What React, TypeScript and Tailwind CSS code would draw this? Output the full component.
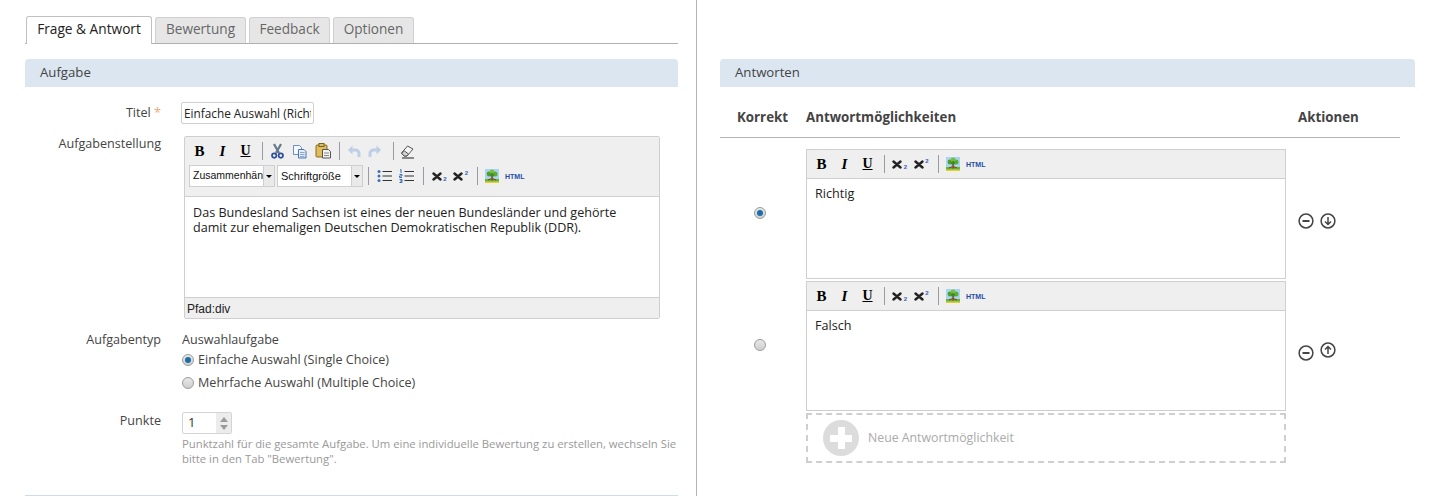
import type { ReactNode } from "react";

function Sep() {
  return <span className="mx-[5px] h-[18px] w-px bg-[#9a9aa0]" />;
}

function Btn({ children, w = "w-[23px]" }: { children: ReactNode; w?: string }) {
  return <span className={`flex h-5 shrink-0 items-center justify-center ${w}`}>{children}</span>;
}

function Bold() {
  return <span className="font-['Liberation_Serif',serif] text-[15px] font-bold leading-none text-black">B</span>;
}
function Italic() {
  return <span className="font-['Liberation_Serif',serif] text-[15px] font-bold italic leading-none text-black">I</span>;
}
function Under() {
  return <span className="font-['Liberation_Serif',serif] text-[14px] font-bold leading-none text-black underline">U</span>;
}

function Sub({ sup }: { sup?: boolean }) {
  return (
    <span className="relative flex h-4 w-[15px] items-center">
      <svg width="10" height="9" viewBox="0 0 10 9">
        <path d="M1.5 1.5 L8.5 7.5 M8.5 1.5 L1.5 7.5" stroke="#222" strokeWidth="2.4" strokeLinecap="round" />
      </svg>
      <span
        className={`absolute right-0 font-['Liberation_Sans',sans-serif] text-[6px] font-bold leading-none text-[#3560b8] ${
          sup ? "top-[2px]" : "bottom-[2px]"
        }`}
      >
        2
      </span>
    </span>
  );
}

function TreeIcon() {
  return (
    <svg width="14" height="14" viewBox="0 0 14 14">
      <rect width="14" height="14" fill="#a8d4f2" />
      <rect y="10" width="14" height="4" fill="#62b832" />
      <rect y="12.5" width="14" height="1.5" fill="#e8cc3a" />
      <path d="M6.4 6h1.4v5.5H6.4z" fill="#8a3524" />
      <path d="M3 11l3.5-1.5M11 11l-3.5-1.5" stroke="#8a3524" />
      <circle cx="4" cy="5" r="2.4" fill="#4f9e2a" />
      <circle cx="10" cy="5" r="2.5" fill="#5bab30" />
      <circle cx="7" cy="3" r="2.4" fill="#74bf3f" />
      <circle cx="7" cy="6" r="2" fill="#3f8a24" />
    </svg>
  );
}

function Html() {
  return (
    <span className="font-['Liberation_Sans',sans-serif] text-[7px] font-bold leading-none text-[#1f4da8]">
      HTML
    </span>
  );
}

function Scissors() {
  return (
    <svg width="13" height="16" viewBox="0 0 13 16" fill="none">
      <path d="M3 1l5 9M10 1L5 10" stroke="#66788c" strokeWidth="2.2" />
      <circle cx="3.2" cy="12.6" r="2.2" stroke="#2b4f9a" strokeWidth="1.7" />
      <circle cx="9.8" cy="12.6" r="2.2" stroke="#2b4f9a" strokeWidth="1.7" />
    </svg>
  );
}

function Copy() {
  return (
    <svg width="16" height="15" viewBox="0 0 16 15">
      <path d="M1.5 1.5h6l2 2v7h-8z" fill="#f4f8fd" stroke="#6d8fc0" />
      <path d="M6.5 5.5h5.5l2 2v6.5H6.5z" fill="#e4eefa" stroke="#4a75b4" />
      <path d="M8 8.5h4.5M8 10.5h4.5M8 12.5h4.5" stroke="#8aa6cf" />
    </svg>
  );
}

function Paste() {
  return (
    <svg width="17" height="16" viewBox="0 0 17 16">
      <rect x="1" y="2" width="11" height="12" rx="1" fill="#e0bd5c" stroke="#8d6a1e" />
      <rect x="4" y="0.5" width="5" height="3" fill="#d8c070" stroke="#7a6020" />
      <path d="M7.5 6.5h6l2 2v6.5h-8z" fill="#f2f2f2" stroke="#555" />
      <path d="M9 10h5M9 12.5h5" stroke="#8a8a8a" />
    </svg>
  );
}

function Undo({ flip }: { flip?: boolean }) {
  return (
    <svg width="14" height="13" viewBox="0 0 14 13" fill="none" className={flip ? "-scale-x-100" : ""}>
      <path d="M4 5h4.5a3.5 3.5 0 0 1 3.5 3.5V12" stroke="#bccfe6" strokeWidth="3" />
      <path d="M5.5 0.5v9L1 5z" fill="#bccfe6" />
    </svg>
  );
}

function Eraser() {
  return (
    <svg width="15" height="15" viewBox="0 0 15 15" fill="none">
      <path d="M1.5 9l6-7 5.5 3-6 7H4z" fill="#f4f4f4" stroke="#555" />
      <path d="M1.5 9l2.5 3h3l1.5-2-4-3z" fill="#cfd4da" stroke="#555" />
      <path d="M2 14h12" stroke="#222" />
    </svg>
  );
}

function BulletList() {
  return (
    <svg width="15" height="14" viewBox="0 0 15 14">
      <g fill="#3a6fb5">
        <circle cx="2" cy="2.5" r="1.5" />
        <circle cx="2" cy="7" r="1.5" />
        <circle cx="2" cy="11.5" r="1.5" />
      </g>
      <path d="M5.5 2.5H15M5.5 7H15M5.5 11.5H15" stroke="#333" />
    </svg>
  );
}

function NumList() {
  return (
    <svg width="15" height="14" viewBox="0 0 15 14">
      <g fill="none" stroke="#3a6fb5">
        <path d="M1 1l1-.5v3.5" />
        <path d="M0.5 5.5h2.5v1.5H.5v1.5h2.5" />
        <path d="M.5 10.5H3v3H.5M1 12h2" />
      </g>
      <path d="M5.5 2.5H15M5.5 7H15M5.5 11.5H15" stroke="#333" />
    </svg>
  );
}

function SelectArrow() {
  return (
    <span className="flex h-full w-[11px] shrink-0 items-center justify-center border-l border-[#cfcfcf] bg-[#e9e9e9]">
      <span className="h-0 w-0 border-x-[3px] border-t-[3px] border-x-transparent border-t-black" />
    </span>
  );
}

function SmallToolbar() {
  return (
    <div className="flex h-[29px] items-center border-b border-[#cfcfcf] bg-[#efefef] pl-[3px]">
      <Btn><Bold /></Btn>
      <Btn><Italic /></Btn>
      <Btn><Under /></Btn>
      <Sep />
      <Btn w="w-[19px]"><Sub /></Btn>
      <Btn w="w-[24px]"><Sub sup /></Btn>
      <Sep />
      <Btn w="w-[18px]"><TreeIcon /></Btn>
      <span className="ml-[4px] flex w-[22px] items-center"><Html /></span>
    </div>
  );
}

function AnswerEditor({ text }: { text: string }) {
  return (
    <div className="h-[130px] w-[480px] border border-[#cfcfcf]">
      <SmallToolbar />
      <div className="px-2 pt-[7px] text-[12.6px] leading-[15px] text-[#222]">{text}</div>
    </div>
  );
}

function Radio({ checked }: { checked?: boolean }) {
  return (
    <span className="flex h-3 w-3 shrink-0 items-center justify-center rounded-full border border-[#9c9c9c] bg-gradient-to-b from-[#e8e8e8] to-[#cfcfcf]">
      {checked && <span className="h-[6px] w-[6px] rounded-full bg-[#1b6fa8]" />}
    </span>
  );
}

function CircleIcon({ kind }: { kind: "minus" | "up" | "down" }) {
  return (
    <svg width="16" height="16" viewBox="0 0 16 16" fill="none" stroke="#444" strokeWidth="1.5">
      <circle cx="8" cy="8" r="6.9" />
      {kind === "minus" && <path d="M4.5 8h7" strokeWidth="2" />}
      {kind === "down" && <path d="M8 4v7.5M5 8.5l3 3 3-3" />}
      {kind === "up" && <path d="M8 12V4.5M5 7.5l3-3 3 3" />}
    </svg>
  );
}

function SectionBar({ title, className }: { title: string; className: string }) {
  return (
    <div className={`flex h-[28px] items-center rounded-t-[4px] bg-[#dce6f0] pl-[15px] text-[13.2px] text-[#444] ${className}`}>
      {title}
    </div>
  );
}

function Label({ children }: { children: ReactNode }) {
  return <div className="w-[136px] shrink-0 text-right text-[12.6px] leading-[18px] text-[#444]">{children}</div>;
}

export default function App() {
  return (
    <div className="flex h-[496px] w-[1437px] overflow-hidden bg-white font-['Open_Sans',sans-serif]">
      {/* Left pane */}
      <div className="w-[697px] shrink-0 border-r border-[#b4b4b4] pl-[25px] pt-4">
        <div className="flex h-[28px] w-[653px] items-end gap-[3px] border-b border-[#b0b0b0] pl-px">
          <div className="-mb-px flex h-[28px] w-[126px] items-center justify-center rounded-t-[3px] border border-b-0 border-[#c0c0c0] bg-white pb-[3px] text-[13.7px] text-[#222]">
            Frage &amp; Antwort
          </div>
          <div className="flex h-[26px] w-[91px] items-center justify-center rounded-t-[3px] border border-b-0 border-[#d0d0d0] bg-[#e6e6e6] pb-[2px] text-[13.6px] text-[#666]">
            Bewertung
          </div>
          <div className="flex h-[26px] w-[81px] items-center justify-center rounded-t-[3px] border border-b-0 border-[#d0d0d0] bg-[#e6e6e6] pb-[2px] text-[13.6px] text-[#666]">
            Feedback
          </div>
          <div className="flex h-[26px] w-[81px] items-center justify-center rounded-t-[3px] border border-b-0 border-[#d0d0d0] bg-[#e6e6e6] pb-[2px] text-[13.6px] text-[#666]">
            Optionen
          </div>
        </div>

        <SectionBar title="Aufgabe" className="mt-[15px] w-[653px]" />

        {/* Titel */}
        <div className="mt-[15px] flex items-center">
          <Label>
            Titel <span className="text-[#f0a878]">*</span>
          </Label>
          <input
            readOnly
            value="Einfache Auswahl (Richtig/Falsch)"
            className="ml-5 h-[22px] w-[133px] rounded-[2px] border border-[#cfcfcf] px-[2px] pb-px text-[11.8px] text-[#222] outline-none"
          />
        </div>

        {/* Aufgabenstellung */}
        <div className="mt-3 flex items-start">
          <div className="-mt-px"><Label>Aufgabenstellung</Label></div>
          <div className="ml-[23px] h-[183px] w-[476px] rounded-[2px] border border-[#cfcfcf]">
            <div className="h-[60px] border-b border-[#cfcfcf] bg-[#efefef] px-[3px] pt-[4px]">
              <div className="flex h-5 items-center">
                <Btn><Bold /></Btn>
                <Btn><Italic /></Btn>
                <Btn><Under /></Btn>
                <Sep />
                <Btn w="w-[19px]"><Scissors /></Btn>
                <Btn w="w-[25px]"><Copy /></Btn>
                <Btn w="w-[22px]"><Paste /></Btn>
                <Sep />
                <Btn w="w-[17px]"><Undo /></Btn>
                <Btn w="w-[26px]"><Undo flip /></Btn>
                <Sep />
                <Btn w="w-[17px]"><Eraser /></Btn>
              </div>
              <div className="mt-[4px] flex h-[22px] items-center">
                <div className="ml-px flex h-[22px] w-[86px] items-center overflow-hidden border border-[#cfcfcf] bg-white">
                  <span className="flex-1 overflow-hidden whitespace-nowrap pl-[3px] font-['Liberation_Sans',sans-serif] text-[10.5px] text-[#111]">
                    Zusammenhäng
                  </span>
                  <SelectArrow />
                </div>
                <div className="ml-[2px] flex h-[22px] w-[86px] items-center border border-[#cfcfcf] bg-white">
                  <span className="flex-1 whitespace-nowrap pl-[3px] font-['Liberation_Sans',sans-serif] text-[11px] text-[#111]">
                    Schriftgröße
                  </span>
                  <SelectArrow />
                </div>
                <Sep />
                <Btn w="w-[20px]"><BulletList /></Btn>
                <Btn w="w-[24px]"><NumList /></Btn>
                <Sep />
                <Btn w="w-[20px]"><Sub /></Btn>
                <Btn w="w-[23px]"><Sub sup /></Btn>
                <Sep />
                <Btn w="w-[17px]"><TreeIcon /></Btn>
                <span className="ml-[5px] flex w-[20px] items-center"><Html /></span>
              </div>
            </div>
            <div className="h-[100px] px-2 pt-2 text-[12.6px] leading-[15px] text-[#222]">
              Das Bundesland Sachsen ist eines der neuen Bundesländer und gehörte
              <br />
              damit zur ehemaligen Deutschen Demokratischen Republik (DDR).
            </div>
            <div className="flex h-[21px] items-center border-t border-[#cfcfcf] bg-[#efefef] pl-[2px] pt-px font-['Liberation_Sans',sans-serif] text-[12px] text-[#222]">
              Pfad:div
            </div>
          </div>
        </div>

        {/* Aufgabentyp */}
        <div className="mt-3 flex items-start">
          <Label>Aufgabentyp</Label>
          <div className="ml-[21px] text-[12.6px] text-[#444]">
            <div className="leading-[18px]">Auswahlaufgabe</div>
            <div className="mt-[2px] flex h-[18px] items-center gap-[4px]">
              <Radio checked />
              Einfache Auswahl (Single Choice)
            </div>
            <div className="mt-[5px] flex h-[18px] items-center gap-[4px]">
              <Radio />
              Mehrfache Auswahl (Multiple Choice)
            </div>
          </div>
        </div>

        {/* Punkte */}
        <div className="mt-5 flex items-start">
          <Label>Punkte</Label>
          <div className="ml-[21px]">
            <div className="flex h-[22px] w-[50px] items-stretch overflow-hidden rounded-[2px] border border-[#d4d4d4]">
              <span className="flex w-[33px] items-center pl-[5px] text-[13px] text-[#333]">1</span>
              <span className="flex flex-1 flex-col items-center justify-center gap-[3px] bg-[#ececec]">
                <span className="h-0 w-0 border-x-[4px] border-b-[5px] border-x-transparent border-b-[#9a9a9a]" />
                <span className="h-0 w-0 border-x-[4px] border-t-[5px] border-x-transparent border-t-[#9a9a9a]" />
              </span>
            </div>
            <p className="mt-[2px] w-[496px] text-[11.3px] leading-[15px] text-[#999]">
              Punktzahl für die gesamte Aufgabe. Um eine individuelle Bewertung zu erstellen, wechseln Sie bitte in den Tab "Bewertung".
            </p>
          </div>
        </div>

        <div className="mt-[29px] h-px w-[653px] bg-[#cfdbe8]" />
      </div>

      {/* Right pane */}
      <div className="flex-1 pl-[23px] pt-[59px]">
        <SectionBar title="Antworten" className="w-[695px]" />

        <div className="mt-[14px] flex h-[37px] w-[680px] items-center border-b border-[#b4b4b4] pb-[3px] text-[13.3px] font-bold text-[#444]">
          <span className="w-[86px] pl-[17px]">Korrekt</span>
          <span className="w-[492px]">Antwortmöglichkeiten</span>
          <span>Aktionen</span>
        </div>

        <div className="mt-[11px] flex flex-col gap-[2px]">
          <div className="flex items-start">
            <div className="flex h-[130px] w-[86px] items-center justify-center">
              <span className="mb-[2px] mr-[6px]"><Radio checked /></span>
            </div>
            <AnswerEditor text="Richtig" />
            <div className="ml-3 flex items-center gap-[6px] pt-[64px]">
              <CircleIcon kind="minus" />
              <CircleIcon kind="down" />
            </div>
          </div>
          <div className="flex items-start">
            <div className="flex h-[130px] w-[86px] items-center justify-center">
              <span className="mb-[2px] mr-[6px]"><Radio /></span>
            </div>
            <AnswerEditor text="Falsch" />
            <div className="ml-3 flex items-start gap-[6px] pt-[64px]">
              <CircleIcon kind="minus" />
              <span className="-mt-[3px]"><CircleIcon kind="up" /></span>
            </div>
          </div>
          <div className="flex">
            <div className="w-[86px]" />
            <div className="flex h-[50px] w-[480px] items-center border-2 border-dashed border-[#cfcfcf] pl-[15px] text-[12.3px] text-[#aaa]">
              <span className="relative mr-[9px] flex h-9 w-9 items-center justify-center rounded-full bg-[#dcdcdc]">
                <span className="absolute h-[22px] w-[7px] bg-white" />
                <span className="absolute h-[7px] w-[22px] bg-white" />
              </span>
              Neue Antwortmöglichkeit
            </div>
          </div>
        </div>
      </div>
    </div>
  );
}
